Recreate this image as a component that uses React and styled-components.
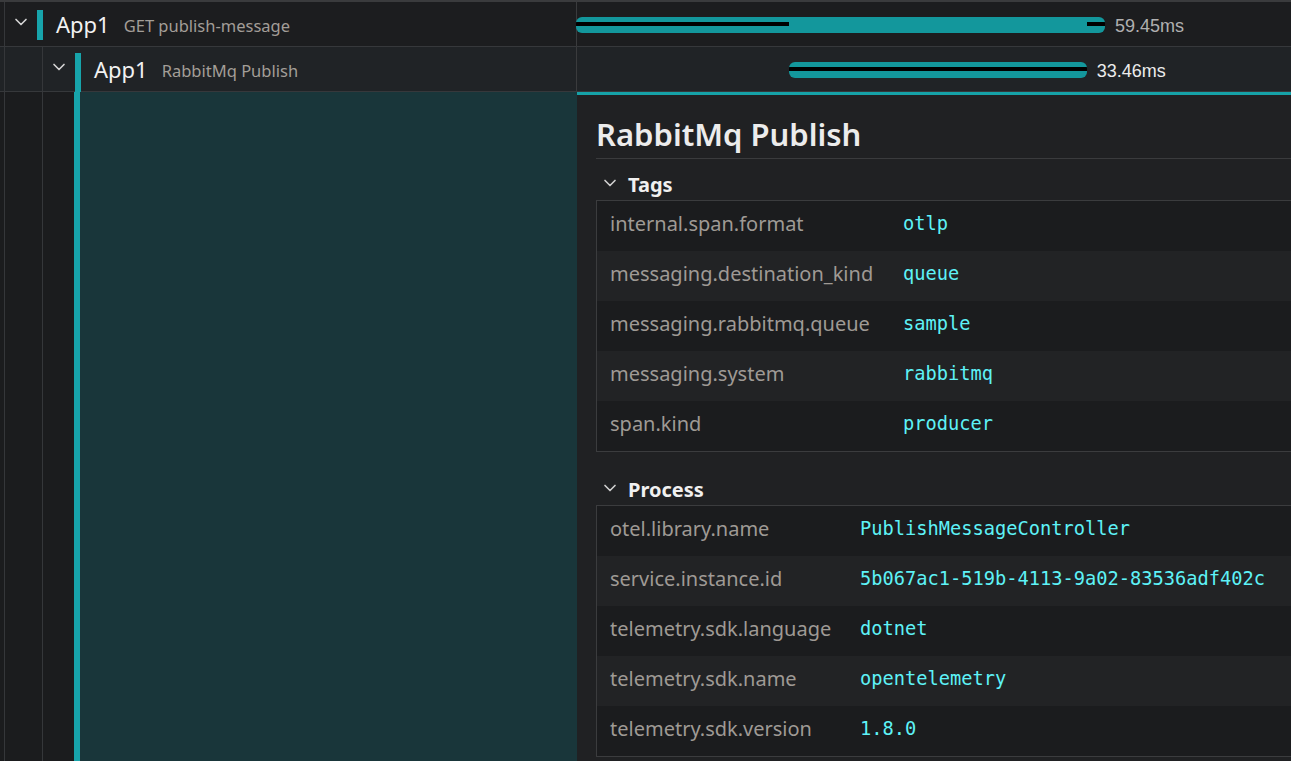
import styled, { createGlobalStyle } from "styled-components"
import { ChevronDown } from "lucide-react"

const GlobalStyle = createGlobalStyle`
  html, body {
    margin: 0;
    padding: 0;
    background: #1b1c1e;
  }
  * { box-sizing: border-box; }
`

const PX_PER_MS = 529 / 59.45

const spans = [
  { depth: 0, service: "App1", op: "GET publish-message", start: 0, duration: 59.45, dark: [[0, 23.94], [57.4, 59.45]], label: "59.45ms", dim: true },
  { depth: 1, service: "App1", op: "RabbitMq Publish", start: 23.94, duration: 33.46, dark: [[23.94, 57.4]], label: "33.46ms", dim: false, selected: true },
]

const tags = [
  ["internal.span.format", "otlp"],
  ["messaging.destination_kind", "queue"],
  ["messaging.rabbitmq.queue", "sample"],
  ["messaging.system", "rabbitmq"],
  ["span.kind", "producer"],
]

const process = [
  ["otel.library.name", "PublishMessageController"],
  ["service.instance.id", "5b067ac1-519b-4113-9a02-83536adf402c"],
  ["telemetry.sdk.language", "dotnet"],
  ["telemetry.sdk.name", "opentelemetry"],
  ["telemetry.sdk.version", "1.8.0"],
]

const App = () => {
  return (
    <Page>
      <GlobalStyle />
      {spans.map((s, i) => (
        <SpanRow key={i} selected={s.selected}>
          <TreeCell>
            {Array.from({ length: s.depth }).map((_, d) => (
              <Guide key={d} />
            ))}
            <Toggle>
              <ChevronDown size={20} strokeWidth={2} />
            </Toggle>
            <ServiceBar mode={s.selected ? "start" : "row"} />
            <Service>{s.service}</Service>
            <Operation>{s.op}</Operation>
          </TreeCell>
          <TimelineCell>
            <Bar style={{ marginLeft: s.start * PX_PER_MS - 1, width: s.duration * PX_PER_MS }}>
              {s.dark.map(([a, b], j) => (
                <DarkLine
                  key={j}
                  style={{ left: (a - s.start) * PX_PER_MS, width: (b - a) * PX_PER_MS }}
                />
              ))}
            </Bar>
            <Duration dim={s.dim}>{s.label}</Duration>
          </TimelineCell>
        </SpanRow>
      ))}
      <Body>
        <TreeFill>
          <Guide />
          <Guide narrow />
          <ServiceBar mode="fill" />
          <SelectedFill />
        </TreeFill>
        <Detail>
          <Title>RabbitMq Publish</Title>
          <Section>
            <SectionHead>
              <ChevronDown size={20} strokeWidth={2} />
              <span>Tags</span>
            </SectionHead>
            <KvTable>
              {tags.map(([k, v]) => (
                <KvRow key={k}>
                  <Key width={293}>{k}</Key>
                  <Value>{v}</Value>
                </KvRow>
              ))}
            </KvTable>
          </Section>
          <Section>
            <SectionHead>
              <ChevronDown size={20} strokeWidth={2} />
              <span>Process</span>
            </SectionHead>
            <KvTable>
              {process.map(([k, v]) => (
                <KvRow key={k}>
                  <Key width={250}>{k}</Key>
                  <Value>{v}</Value>
                </KvRow>
              ))}
            </KvTable>
          </Section>
        </Detail>
      </Body>
    </Page>
  )
}

const barMargins = {
  row: "8px 0 6px",
  start: "6px 0 -1px",
  fill: "0",
}

const Page = styled.div`
  width: 1291px;
  height: 761px;
  overflow: hidden;
  display: flex;
  flex-direction: column;
  background: #1b1c1e;
  border-top: 2px solid #3a3b3d;
  font-family: "Noto Sans", "Open Sans", sans-serif;
`
const SpanRow = styled.div`
  display: grid;
  grid-template-columns: 577px 1fr;
  height: 45px;
  flex-shrink: 0;
  border-bottom: 1px solid #36383b;
  background: ${(p) => (p.selected ? "#202326" : "#1c1d1f")};
`
const TreeCell = styled.div`
  display: flex;
  align-items: stretch;
  padding-left: 4px;
  border-right: 1px solid #3a3b3d;
  position: relative;
`
const Guide = styled.div`
  width: ${(p) => (p.narrow ? 32 : 38)}px;
  flex-shrink: 0;
  border-left: 1px solid #35373a;
`
const Toggle = styled.div`
  width: 33px;
  flex-shrink: 0;
  border-left: 1px solid #35373a;
  display: flex;
  align-items: center;
  justify-content: center;
  color: #d4d4d4;
  padding-bottom: 4px;
`
const ServiceBar = styled.div`
  width: 6px;
  flex-shrink: 0;
  background: #17a4ab;
  margin: ${(p) => barMargins[p.mode]};
  position: relative;
  z-index: 1;
`
const Service = styled.span`
  align-self: center;
  margin-left: 13px;
  font-size: 22px;
  color: #f2f2f2;
`
const Operation = styled.span`
  align-self: center;
  margin-left: 14px;
  font-size: 16.5px;
  color: #a39e98;
  padding-top: 2px;
`
const TimelineCell = styled.div`
  display: flex;
  align-items: center;
`
const Bar = styled.div`
  position: relative;
  height: 16px;
  flex-shrink: 0;
  background: #13979c;
  border-radius: 6px;
  overflow: hidden;
  margin-top: 2px;
`
const DarkLine = styled.div`
  position: absolute;
  top: 5px;
  height: 4px;
  background: #000;
`
const Duration = styled.span`
  margin: 4px 0 0 10px;
  font-family: "Liberation Sans", Arial, sans-serif;
  font-size: 18px;
  color: ${(p) => (p.dim ? "#b0b0b0" : "#ececec")};
`
const Body = styled.div`
  flex: 1;
  display: grid;
  grid-template-columns: 577px 1fr;
  min-height: 0;
`
const TreeFill = styled.div`
  display: flex;
  padding-left: 4px;
`
const SelectedFill = styled.div`
  flex: 1;
  background: #19363a;
`
const Detail = styled.div`
  border-top: 3px solid #16a2a8;
  background: #202123;
  padding: 18px 0 0 20px;
  overflow: hidden;
`
const Title = styled.h2`
  margin: 0;
  font-size: 31px;
  font-weight: 600;
  color: #ececec;
  line-height: 42px;
  padding-bottom: 3px;
  border-bottom: 1px solid #3a3b3d;
  margin-left: -1px;
`
const Section = styled.section`
  margin-top: 9px;
  & + & {
    margin-top: 21px;
  }
`
const SectionHead = styled.div`
  display: flex;
  align-items: center;
  gap: 8px;
  padding-left: 3px;
  height: 32px;
  font-size: 20px;
  font-weight: 700;
  color: #f0f0f0;
  svg {
    color: #d0d0d0;
    margin-bottom: 2px;
  }
`
const KvTable = styled.div`
  width: 760px;
  margin-left: -1px;
  border: 1px solid #3b3c3e;
`
const KvRow = styled.div`
  display: flex;
  align-items: center;
  height: 50px;
  padding: 0 0 6px 13px;
  background: #1b1c1e;
  &:nth-child(even) {
    background: #222325;
  }
`
const Key = styled.span`
  width: ${(p) => p.width}px;
  flex-shrink: 0;
  font-size: 20px;
  color: #9f9a95;
`
const Value = styled.span`
  font-family: "DejaVu Sans Mono", "Liberation Mono", monospace;
  font-size: 18.7px;
  color: #5ef2f7;
`

export default App
